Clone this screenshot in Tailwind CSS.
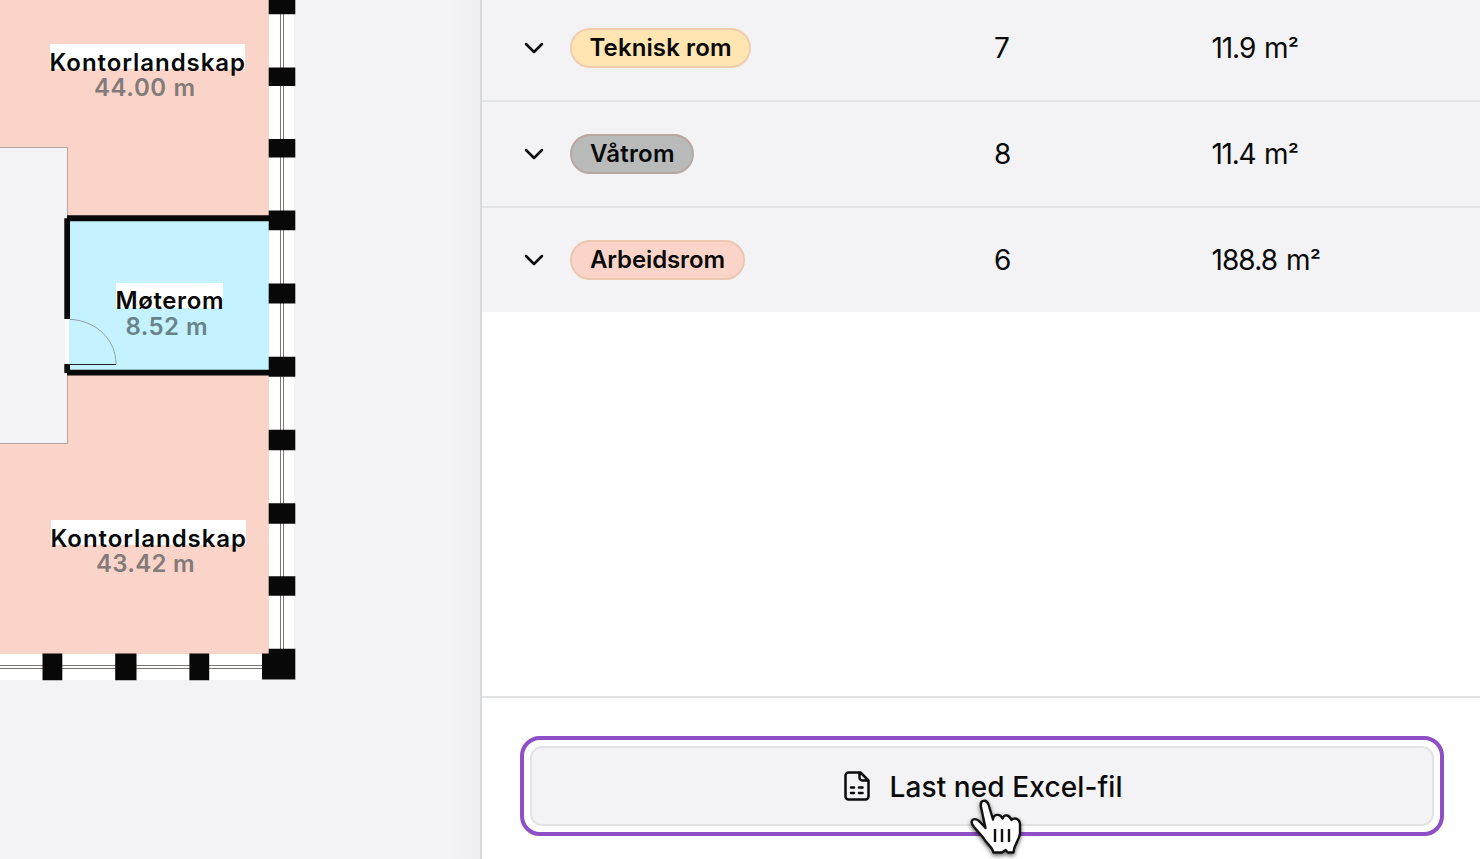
<!DOCTYPE html>
<html lang="no">
<head>
<meta charset="utf-8">
<title>Romoversikt</title>
<script src="https://cdn.jsdelivr.net/npm/@tailwindcss/browser@4"></script>
</head>
<body class="h-[859px] w-[1480px] overflow-hidden bg-white font-[Inter,sans-serif] text-[#0a0a0a]">
<main class="relative flex h-full">
  <section class="relative w-[480px] shrink-0 bg-[#f3f3f5]">
    <svg class="block h-[859px] w-[480px]" viewBox="0 0 480 859" shape-rendering="crispEdges">
      <!-- rooms -->
      <path fill="#fbd4c9" d="M0 0H269V654H0V443H68V148H0Z"/>
      <path fill="#fff" d="M269 0H294V680H0V654H269Z"/>
      <path fill="none" stroke="#b3a6a4" d="M0 147.500H67.500V218M67.500 375V443.500H0"/>
      <path fill="#c4f2fe" d="M68 218H269V372H68Z"/>
      <!-- windows -->
      <path fill="none" stroke="#7f7472" d="M280.500 0V654M283.500 0V654M0 665.500H269M0 668.500H269"/>
      <!-- walls -->
      <path fill="#080808" shape-rendering="auto" d="M67 215.300H269V221.300H67ZM64.300 218.300H70V319H64.300ZM64.300 364H70V369.700H269V375.500H67V373H64.300Z"/>
      <path fill="#fff" d="M65 319H69V364H65Z"/>
      <path fill="none" stroke="#222" d="M68 364.500H116"/>
      <path fill="none" stroke="#8a9698" stroke-width=".9" shape-rendering="auto" d="M70 319.300C98 321 116 341 116 364"/>
      <!-- pillars -->
      <path fill="#080808" shape-rendering="auto" d="M268.700 0H295.300V14.300H268.700ZM268.700 67.500H295.300V86H268.700ZM268.700 139H295.300V157.500H268.700ZM268.700 210.500H295.300V230.300H268.700ZM268.700 283.500H295.300V303.500H268.700ZM268.700 356.700H295.300V376.700H268.700ZM268.700 429.700H295.300V450.200H268.700ZM268.700 503.200H295.300V523.700H268.700ZM268.700 576.300H295.300V595.700H268.700ZM268.700 648.700H295.300V679.500H262V653.500H268.700ZM42.500 653.500H62.300V680.200H42.500ZM115.200 653.500H136.500V680.200H115.200ZM189.400 653.500H209.200V680.200H189.400Z"/>
      <!-- labels -->
      <path fill="#fff" d="M50 44H245V69H50ZM116 283H223V308H116ZM51 520H246V545H51Z"/>
      <g font-family="Inter, sans-serif" font-weight="620" font-size="24" fill="#080808" shape-rendering="auto">
        <text x="49.500" y="70.500" textLength="195.500">Kontorlandskap</text>
        <text x="115.500" y="309.300" textLength="108">Møterom</text>
        <text x="50.500" y="546.500" textLength="195.500">Kontorlandskap</text>
        <g fill="#827b79">
          <text x="94" y="96" textLength="101">44.00 m</text>
          <text x="96" y="572" textLength="98.500">43.42 m</text>
        </g>
        <text x="125.500" y="334.500" textLength="82" fill="#6a8388">8.52 m</text>
      </g>
    </svg>
    <div class="absolute inset-y-0 right-0 w-8 bg-linear-to-r from-transparent to-black/[.015]"></div>
  </section>

  <aside class="flex min-w-0 flex-1 flex-col border-l-2 border-[#d8dadd] bg-white">
    <div class="flex-1 overflow-hidden text-[28px]">
      <div class="-mt-1 flex h-[106px] items-center border-b-2 border-[#e2e3e5] bg-[#f3f3f5] pl-[42px]">
        <svg class="mr-[26px] h-5 w-5" viewBox="0 0 20 20" fill="none" stroke="#0a0a0a" stroke-width="2.500" stroke-linecap="round" stroke-linejoin="round"><path d="M2 6l8 8 8-8"/></svg>
        <div class="flex w-[424px]"><span class="flex h-10 w-[181px] items-center justify-center rounded-full border-2 border-[#f0cdb0] bg-[#ffe5b1] text-2xl font-[620]"><svg class="h-10 w-[141px] overflow-visible"><text x="-.5" y="28" textLength="142" fill="#0a0a0a">Teknisk rom</text></svg></span></div>
        <div class="w-[218px]">7</div>
        <svg class="h-10 w-[110px] overflow-visible" fill="#0a0a0a"><text x="-.5" y="30" textLength="77" word-spacing="2">11.9 m</text><text x="76" y="29" font-size="24" font-weight="500">²</text></svg>
      </div>
      <div class="flex h-[106px] items-center border-b-2 border-[#e2e3e5] bg-[#f3f3f5] pl-[42px]">
        <svg class="mr-[26px] h-5 w-5" viewBox="0 0 20 20" fill="none" stroke="#0a0a0a" stroke-width="2.500" stroke-linecap="round" stroke-linejoin="round"><path d="M2 6l8 8 8-8"/></svg>
        <div class="flex w-[424px]"><span class="flex h-10 w-[124px] items-center justify-center rounded-full border-2 border-[#b7a7a3] bg-[#b8bbba] text-2xl font-[620]"><svg class="h-10 w-[84px] overflow-visible"><text x="0" y="28" textLength="84.500" fill="#0a0a0a">Våtrom</text></svg></span></div>
        <div class="w-[218px]">8</div>
        <svg class="h-10 w-[110px] overflow-visible" fill="#0a0a0a"><text x="-.5" y="30" textLength="77" word-spacing="2">11.4 m</text><text x="76" y="29" font-size="24" font-weight="500">²</text></svg>
      </div>
      <div class="flex h-[104px] items-center bg-[#f3f3f5] pl-[42px]">
        <svg class="mr-[26px] h-5 w-5" viewBox="0 0 20 20" fill="none" stroke="#0a0a0a" stroke-width="2.500" stroke-linecap="round" stroke-linejoin="round"><path d="M2 6l8 8 8-8"/></svg>
        <div class="flex w-[424px]"><span class="flex h-10 w-[175px] items-center justify-center rounded-full border-2 border-[#ebc8b0] bg-[#fbd4c9] text-2xl font-[620]"><svg class="h-10 w-[134px] overflow-visible"><text x="-1" y="28" textLength="135" fill="#0a0a0a">Arbeidsrom</text></svg></span></div>
        <div class="w-[218px]">6</div>
        <svg class="h-10 w-[110px] overflow-visible" fill="#0a0a0a"><text x="-.5" y="30" textLength="99" word-spacing="2">188.8 m</text><text x="98" y="29" font-size="24" font-weight="500">²</text></svg>
      </div>
    </div>
    <footer class="h-[163px] border-t-2 border-[#e2e3e5] pt-[38px] pr-9 pl-[38px]">
      <div class="h-[100px] rounded-[20px] border-4 border-[#8f4fc6] p-[6px]">
        <button class="flex h-20 w-full items-center justify-center gap-5 rounded-xl border-2 border-[#e2e3e5] bg-[#f3f3f5] pl-px text-[28px] font-medium">
          <svg class="h-[30px] w-[26px]" viewBox="0 0 26 30" fill="none" stroke="#0a0a0a" stroke-width="2.500" stroke-linecap="round" stroke-linejoin="round"><path d="M16.500 1.500H4.500a3 3 0 0 0-3 3v21a3 3 0 0 0 3 3h17a3 3 0 0 0 3-3V9.500ZM15.500 1.500v5a3 3 0 0 0 3 3h6M7 16.500h3M15 16.500h3.500M7 22h3M15 22h3.500"/></svg>
          <svg class="h-10 w-[232px] overflow-visible"><text x="-.5" y="30.500" textLength="233" fill="#0a0a0a">Last ned Excel-fil</text></svg>
        </button>
      </div>
    </footer>
  </aside>

  <svg class="absolute top-[798px] left-[968px] h-[61px] w-14 drop-shadow-[0_2px_2px_rgba(0,0,0,.6)]" viewBox="0 0 56 61" fill="#fff" stroke="#111" stroke-width="2.400" stroke-linejoin="round" stroke-linecap="round">
    <path d="M17.500 30L13 9C11.500 1.500 18.500 1 20.500 6.500L25 21.500C25.500 16 32 15 34.500 20.500C36.500 15.500 41.500 17 43.500 22C46.500 19 51.500 20.500 52 26V35C51.500 43 46 45 45.500 54.500H40L37.500 52L34 54.500H25.500C24.500 49 18.500 46 15.500 40L6 29C-.5 21 8 18.500 12.500 24.500Z"/>
    <path stroke-linecap="butt" d="M27 31V44M34 31V44M41 31V44"/>
  </svg>
</main>
</body>
</html>
